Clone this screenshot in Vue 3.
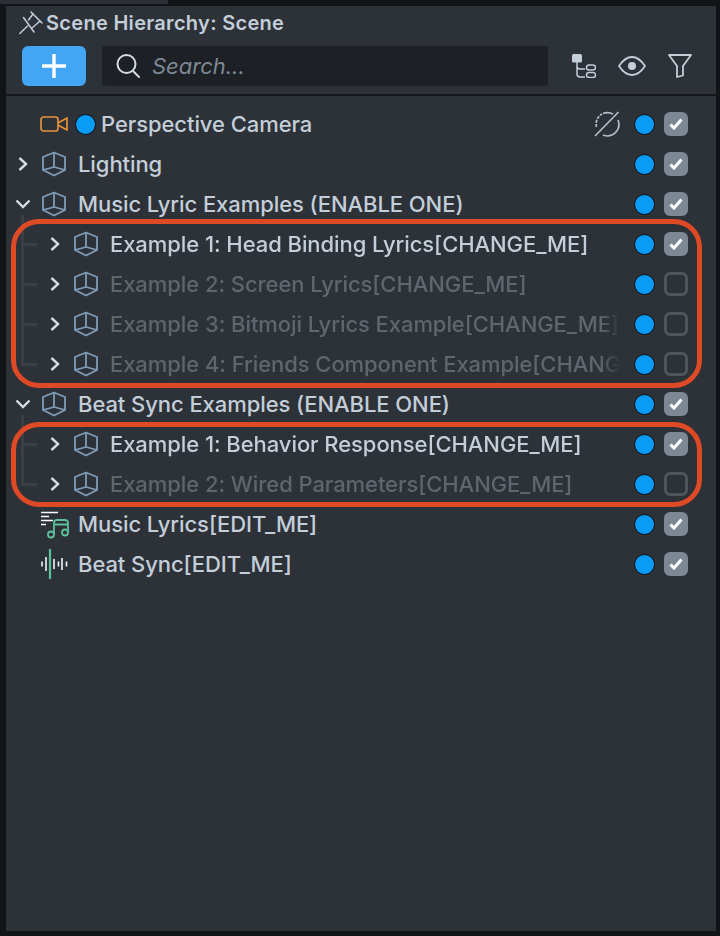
<script setup>
const groups = [
  {
    name: "Music Lyric Examples (ENABLE ONE)",
    box: "box-a",
    children: [
      { name: "Example 1: Head Binding Lyrics[CHANGE_ME]", on: true },
      { name: "Example 2: Screen Lyrics[CHANGE_ME]", on: false },
      { name: "Example 3: Bitmoji Lyrics Example[CHANGE_ME]", on: false },
      { name: "Example 4: Friends Component Example[CHANGE_ME]", on: false },
    ],
  },
  {
    name: "Beat Sync Examples (ENABLE ONE)",
    box: "box-b",
    children: [
      { name: "Example 1: Behavior Response[CHANGE_ME]", on: true },
      { name: "Example 2: Wired Parameters[CHANGE_ME]", on: false },
    ],
  },
];
</script>

<template>
  <div class="screen">
    <div class="tabstrip"><div class="tab"></div></div>
    <div class="panel">
      <header class="head">
        <div class="title">
          <svg class="pin" width="24" height="24" viewBox="0 0 24 24" fill="none" stroke="#c3ced9" stroke-width="1.500" stroke-linejoin="round" stroke-linecap="round">
            <path d="M12 1 23 12" />
            <path d="M14 3 9.500 9M21 10 13 17" />
            <path d="M4.500 6.500 15 21" />
            <path d="M8.500 15 .8 22.500" />
          </svg>
          <span>Scene Hierarchy: Scene</span>
        </div>
        <div class="tools">
          <button class="add">
            <svg width="24" height="24" viewBox="0 0 24 24"><path d="M12 1v22M1 12h22" stroke="#fff" stroke-width="3.400" stroke-linecap="round" /></svg>
          </button>
          <div class="search">
            <svg width="26" height="28" viewBox="0 0 26 28" fill="none" stroke="#d5dde4" stroke-width="2">
              <circle cx="11.500" cy="12" r="9" />
              <path d="M18 19l6 6" stroke-linecap="round" />
            </svg>
            <span>Search...</span>
          </div>
          <div class="tool-icons">
            <svg width="24" height="24" viewBox="0 0 24 24" fill="none" stroke="#c3ced9" stroke-width="1.500">
              <rect x="0" y="0" width="10" height="8.500" rx="1.500" fill="#c3ced9" stroke="none" />
              <path d="M5 8v12a3 3 0 0 0 3 3h5M5 12a3 3 0 0 0 3 3h5" />
              <rect x="14.500" y="11" width="9" height="5" rx="2.500" />
              <rect x="14.500" y="18.500" width="9" height="5" rx="2.500" />
            </svg>
            <svg width="28" height="20" viewBox="0 0 28 20" fill="none" stroke="#c3ced9" stroke-width="1.800">
              <path d="M1 10C5 4 9 1 14 1s9 3 13 9c-4 6-8 9-13 9S5 16 1 10Z" />
              <circle cx="14" cy="10" r="4" fill="#c3ced9" stroke="none" />
            </svg>
            <svg width="24" height="24" viewBox="0 0 24 24" fill="none" stroke="#c3ced9" stroke-width="1.800" stroke-linejoin="round">
              <path d="M1 1h22l-8 11v9.500L9 23V12Z" />
            </svg>
          </div>
        </div>
      </header>

      <div class="tree">
        <div class="row">
          <span class="arrow"></span>
          <svg class="icon" width="28" height="16" viewBox="0 0 28 16" fill="none" stroke="#e59239" stroke-width="1.700" stroke-linejoin="round">
            <rect x="1" y="1" width="17" height="14" rx="2.500" />
            <path d="M18 7l9-5v12l-9-5" />
          </svg>
          <span class="dot dot-lead"></span>
          <span class="label">Perspective Camera</span>
          <svg class="hidden-ico" width="26" height="26" viewBox="0 0 26 26" fill="none" stroke="#b4bfca" stroke-width="1.700">
            <path d="M2.500 16A11.500 11.500 0 0 1 8 3" stroke-dasharray="3 1.200" />
            <path d="M9 2.500A11.500 11.500 0 0 1 19 3" />
            <path d="M24 9A11.500 11.500 0 0 1 9 24" />
            <path d="M1 25 24.500 1" />
          </svg>
          <span class="dot"></span>
          <span class="check on">
            <svg width="14" height="12" viewBox="0 0 14 12"><path d="M1.500 6.500 5 10 12.500 1.500" fill="none" stroke="#fff" stroke-width="3" /></svg>
          </span>
        </div>

        <div class="row">
          <svg class="arrow" width="16" height="16" viewBox="0 0 16 16" fill="none" stroke="#d5dde4" stroke-width="2.400"><path d="M4.500 2l6.500 6-6.500 6" /></svg>
          <svg class="icon cube" width="26" height="26" viewBox="0 0 26 26" fill="none" stroke="#7f9db9" stroke-width="1.800" stroke-linejoin="round">
            <path d="M13 1.500 24 6v13l-11 5.500L2 19V6Z" />
            <path d="M13 1.500V16L2 19M13 16l11 3" />
          </svg>
          <span class="label">Lighting</span>
          <span class="dot"></span>
          <span class="check on">
            <svg width="14" height="12" viewBox="0 0 14 12"><path d="M1.500 6.500 5 10 12.500 1.500" fill="none" stroke="#fff" stroke-width="3" /></svg>
          </span>
        </div>

        <template v-for="g in groups" :key="g.name">
          <div class="row">
            <svg class="arrow" width="16" height="16" viewBox="0 0 16 16" fill="none" stroke="#d5dde4" stroke-width="2.400"><path d="M1.500 4.500l6.500 6.500 6.500-6.500" /></svg>
            <svg class="icon cube" width="26" height="26" viewBox="0 0 26 26" fill="none" stroke="#7f9db9" stroke-width="1.800" stroke-linejoin="round">
              <path d="M13 1.500 24 6v13l-11 5.500L2 19V6Z" />
              <path d="M13 1.500V16L2 19M13 16l11 3" />
            </svg>
            <span class="label">{{ g.name }}</span>
            <span class="dot"></span>
            <span class="check on">
              <svg width="14" height="12" viewBox="0 0 14 12"><path d="M1.500 6.500 5 10 12.500 1.500" fill="none" stroke="#fff" stroke-width="3" /></svg>
            </span>
          </div>
          <div class="group" :class="g.box">
            <div v-for="c in g.children" :key="c.name" class="row child" :class="{ off: !c.on }">
              <svg class="arrow" width="16" height="16" viewBox="0 0 16 16" fill="none" stroke="#d5dde4" stroke-width="2.400"><path d="M4.500 2l6.500 6-6.500 6" /></svg>
              <svg class="icon cube" width="26" height="26" viewBox="0 0 26 26" fill="none" stroke="#7f9db9" stroke-width="1.800" stroke-linejoin="round">
                <path d="M13 1.500 24 6v13l-11 5.500L2 19V6Z" />
                <path d="M13 1.500V16L2 19M13 16l11 3" />
              </svg>
              <span class="label">{{ c.name }}</span>
              <span class="dot"></span>
              <span class="check" :class="{ on: c.on }">
                <svg v-if="c.on" width="14" height="12" viewBox="0 0 14 12"><path d="M1.500 6.500 5 10 12.500 1.500" fill="none" stroke="#fff" stroke-width="3" /></svg>
              </span>
            </div>
          </div>
        </template>

        <div class="row">
          <span class="arrow"></span>
          <svg class="icon wide" width="30" height="30" viewBox="0 0 30 30" fill="none">
            <path d="M1 3.500h17M1 7.500h8M1 11.500h12M1 15.500h5" stroke="#fff" stroke-width="1.700" />
            <path d="M14 25V14a3 3 0 0 1 3-3h8a3 3 0 0 1 3 3v9M14 15.500h14" stroke="#5cc09a" stroke-width="1.800" />
            <circle cx="11" cy="25.500" r="3" stroke="#5cc09a" stroke-width="1.800" />
            <circle cx="25" cy="23.500" r="3" stroke="#5cc09a" stroke-width="1.800" />
          </svg>
          <span class="label">Music Lyrics[EDIT_ME]</span>
          <span class="dot"></span>
          <span class="check on">
            <svg width="14" height="12" viewBox="0 0 14 12"><path d="M1.500 6.500 5 10 12.500 1.500" fill="none" stroke="#fff" stroke-width="3" /></svg>
          </span>
        </div>
        <div class="row">
          <span class="arrow"></span>
          <svg class="icon wide" width="30" height="30" viewBox="0 0 30 30" fill="none" stroke-width="1.700">
            <path d="M10 0v30" stroke="#5cc09a" stroke-width="2.200" />
            <path d="M2 12.500v5M6 8v14M14 10v10M18.500 12.500v5M22 9v12M26.500 12.500v5" stroke="#e6ebf0" />
          </svg>
          <span class="label">Beat Sync[EDIT_ME]</span>
          <span class="dot"></span>
          <span class="check on">
            <svg width="14" height="12" viewBox="0 0 14 12"><path d="M1.500 6.500 5 10 12.500 1.500" fill="none" stroke="#fff" stroke-width="3" /></svg>
          </span>
        </div>
      </div>
    </div>
  </div>
</template>

<style>
body {
  margin: 0;
  background: #121417;
}
</style>

<style scoped>
.screen {
  width: 720px;
  height: 936px;
  background: #121417;
  display: flex;
  flex-direction: column;
  overflow: hidden;
  font-family: Inter, "Liberation Sans", sans-serif;
}
.tabstrip {
  height: 4px;
  flex: none;
}
.tab {
  width: 168px;
  height: 4px;
  background: #2c3036;
}
.panel {
  flex: none;
  width: 710px;
  height: 925px;
  margin: 2px 0 0 6px;
  background: #2d3138;
  display: flex;
  flex-direction: column;
}
.head {
  height: 86px;
  flex: none;
  border-bottom: 2px solid #16181b;
  padding: 2px 0 0 13px;
  box-sizing: content-box;
}
.title {
  height: 30px;
  display: flex;
  align-items: center;
  gap: 3px;
  color: #c3ced9;
  font-size: 20px;
  font-weight: 600;
  letter-spacing: 0.3px;
}
.tools {
  display: flex;
  align-items: center;
  margin-top: 8px;
  padding-left: 3px;
}
.add {
  width: 64px;
  height: 40px;
  border: 0;
  border-radius: 6px;
  background: #42a5f5;
  display: flex;
  align-items: center;
  justify-content: center;
  padding: 0;
  margin-right: 16px;
}
.search {
  width: 446px;
  height: 40px;
  box-sizing: border-box;
  padding-left: 13px;
  border-radius: 3px;
  background: #1d2025;
  display: flex;
  align-items: center;
  gap: 11px;
  color: #7d8894;
  font-size: 22px;
  font-style: italic;
}
.tool-icons {
  display: flex;
  align-items: center;
  margin-left: 24px;
  gap: 22px;
}
.tree {
  flex: 1;
  padding-top: 8px;
}
.row {
  height: 40px;
  display: flex;
  align-items: center;
  padding-right: 28px;
  position: relative;
  color: #c3ced9;
}
.arrow {
  width: 16px;
  height: 16px;
  flex: none;
  margin-left: 9px;
}
.icon {
  flex: none;
  margin: 0 9px;
}
.wide {
  margin: 0 8px 0 9px;
}
.cube {
  margin: 0 11px 0 10px;
}
.label {
  flex: 1;
  min-width: 0;
  white-space: nowrap;
  overflow: hidden;
  font-size: 22px;
  font-weight: 500;
  letter-spacing: -0.07px;
}
.dot {
  flex: none;
  width: 19px;
  height: 19px;
  border-radius: 50%;
  background: #0a9cf5;
  border: 1.500px solid #0b0c0e;
  margin-left: 13px;
  margin-right: 9px;
  box-sizing: content-box;
}
.dot-lead {
  margin: 0 5px 0 -2px;
}
.hidden-ico {
  flex: none;
  margin-left: 6px;
}
.hidden-ico + .dot {
  margin-left: 14px;
}
.check {
  flex: none;
  width: 24px;
  height: 24px;
  box-sizing: border-box;
  border-radius: 6px;
  border: 3px solid #4f555d;
  display: flex;
  align-items: center;
  justify-content: center;
}
.check.on {
  background: #7c8894;
  border: 0;
}
.group {
  position: relative;
}
.group::before {
  content: "";
  position: absolute;
  left: 15px;
  top: -9px;
  bottom: 18px;
  width: 3px;
  background: #3a3f46;
}
.group::after {
  content: "";
  position: absolute;
  left: 5px;
  right: 14px;
  border: 5px solid #de4a26;
  border-radius: 28px;
  pointer-events: none;
}
.box-a::after {
  top: -5px;
  bottom: -4px;
}
.box-b::after {
  top: -2px;
  bottom: -3px;
}
.child {
  padding-left: 32px;
}
.child::before {
  content: "";
  position: absolute;
  left: 18px;
  top: 19px;
  width: 13px;
  height: 3px;
  background: #3a3f46;
}
.child .label {
  -webkit-mask-image: linear-gradient(to right, #000 96%, transparent);
  mask-image: linear-gradient(to right, #000 96%, transparent);
}
.off .label {
  color: #60666e;
}
</style>
